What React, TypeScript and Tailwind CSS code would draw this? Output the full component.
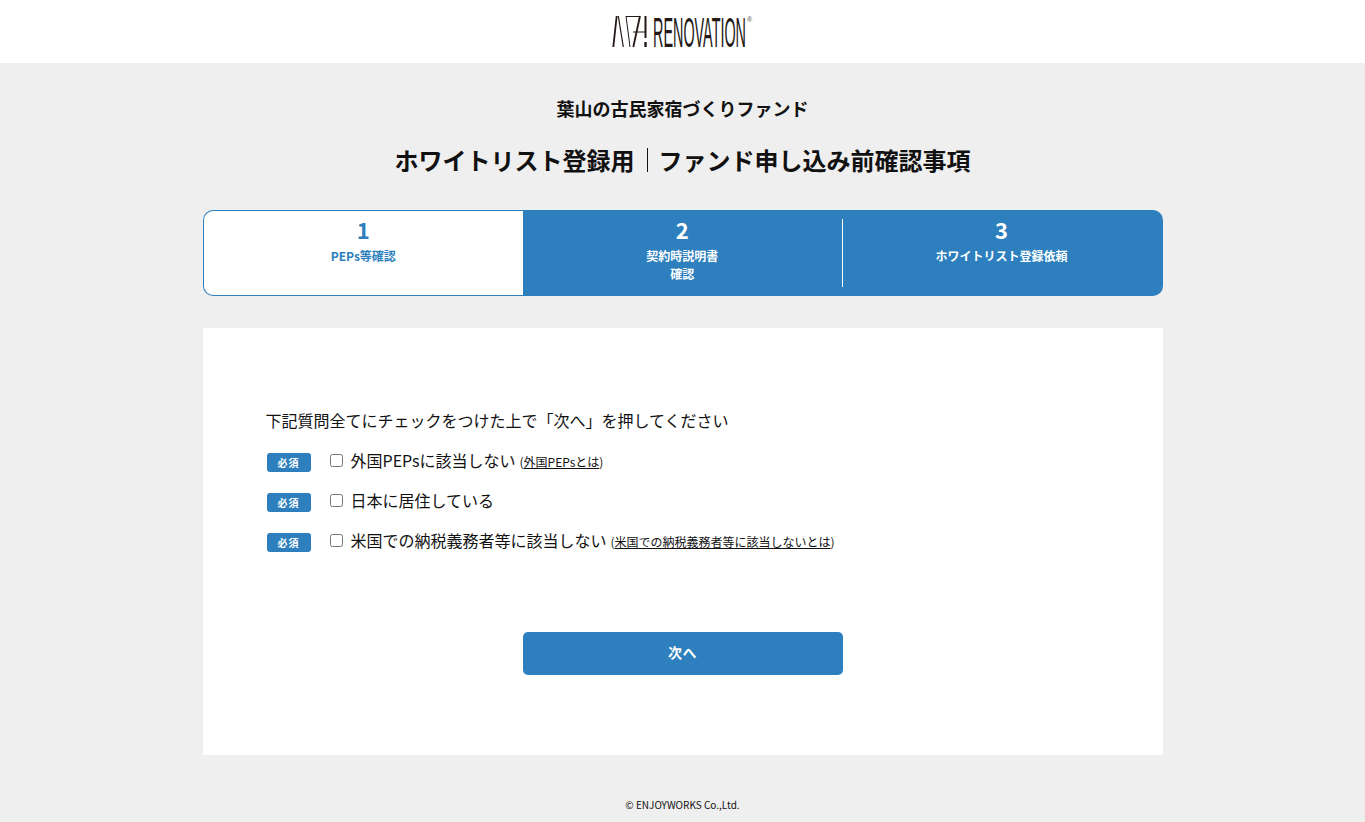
function Logo() {
  return (
    <svg width="141" height="34" viewBox="0 0 141 34" className="block">
      <g stroke="#231815" fill="none">
        <path d="M4.7 1 L1.3 32" strokeWidth="1.8" />
        <path d="M6.3 1 L11.3 32" strokeWidth="1.2" />
        <path d="M14 1 L18 32" strokeWidth="1" />
        <path d="M14 1.5 L28 1.5" strokeWidth="1" />
        <path d="M28 1 L21.3 32" strokeWidth="1.8" />
        <path d="M21 17 L33 17" strokeWidth="1" />
        <path d="M33.5 1 L33.5 23" strokeWidth="2" />
        <path d="M33.5 27 L33.5 32" strokeWidth="2.4" />
      </g>
      <text x="41" y="32" fontFamily="'Liberation Sans', sans-serif" fontSize="42" fill="#231815" textLength="93" lengthAdjust="spacingAndGlyphs">RENOVATION</text>
      <text x="135" y="7" fontFamily="'Liberation Sans', sans-serif" fontSize="7" fill="#555">®</text>
    </svg>
  );
}

function Badge() {
  return (
    <span className="flex h-[19px] w-[44px] shrink-0 items-center justify-center rounded-[3px] bg-[#2d7fbd] text-[10px] font-bold tracking-[1px] text-white">必須</span>
  );
}

function Row({ label, link }: { label: string; link?: string }) {
  return (
    <div className="flex h-[40px] items-center">
      <div className="ml-[1px] mt-[5px]"><Badge /></div>
      <label className="ml-[19px] flex items-center text-[16px] leading-[24px] text-[#111]">
        <input type="checkbox" className="m-0 h-[13px] w-[13px]" />
        <span className="ml-[8px]">{label}</span>
        {link && (
          <span className="ml-[4px] mt-[4px] text-[12px]">(<span className="underline">{link}</span>)</span>
        )}
      </label>
    </div>
  );
}

function Step({ n, children, active, last }: { n: string; children: React.ReactNode; active?: boolean; last?: boolean }) {
  return (
    <div className={active
      ? "h-[86px] w-[320.5px] rounded-l-[10px] border border-r-0 border-[#2d7fbd] bg-white text-center text-[#2d7fbd]"
      : "flex h-[86px] items-center bg-[#2d7fbd] text-center text-white " + (last ? "w-[320px] rounded-r-[10px] pr-[2px]" : "w-[319.5px]")}>
      <div className={active ? "" : "h-[68px] flex-1 " + (last ? "" : "border-r border-white")}>
        <div className={active ? "pt-[4px] text-[22px] font-bold leading-[28px]" : "-mt-[2px] text-[22px] font-bold leading-[24px]"}>{n}</div>
        <div className={active ? "mt-[4px] text-[12px] font-bold leading-[18px]" : "mt-[6px] text-[12px] font-bold leading-[18px]"}>{children}</div>
      </div>
    </div>
  );
}

export default function App() {
  return (
    <div className="min-h-[822px] bg-[#efefef]" style={{ fontFamily: "'Noto Sans CJK JP', 'Noto Sans', sans-serif" }}>
      <header className="flex h-[63px] items-center justify-center bg-white">
        <Logo />
      </header>
      <main className="mx-auto w-[960px]">
        <p className="pt-[31px] text-center text-[18px] font-bold leading-[28px] text-[#111]">葉山の古民家宿づくりファンド</p>
        <h1 className="mt-[21px] flex items-center justify-center text-[24px] font-bold leading-[34px] text-[#111]">
          ホワイトリスト登録用
          <span className="ml-[12px] mr-[11px] h-[24px] w-px bg-[#111]" />
          ファンド申し込み前確認事項
        </h1>
        <div className="mt-[33px] flex">
          <Step n="1" active>PEPs等確認</Step>
          <Step n="2">契約時説明書<br />確認</Step>
          <Step n="3" last>ホワイトリスト登録依頼</Step>
        </div>
        <section className="mt-[32px] h-[427px] bg-white px-[63px] pt-[79px]">
          <p className="text-[16px] leading-[26px] text-[#111]">下記質問全てにチェックをつけた上で「次へ」を押してください</p>
          <div className="mt-[7px]">
            <Row label="外国PEPsに該当しない" link="外国PEPsとは" />
            <Row label="日本に居住している" />
            <Row label="米国での納税義務者等に該当しない" link="米国での納税義務者等に該当しないとは" />
          </div>
          <button className="mx-auto mt-[72px] block h-[43px] w-[320px] rounded-[5px] bg-[#2d7fbd] pb-[2px] text-[14px] font-bold tracking-[0.5px] text-white">次へ</button>
        </section>
        <p className="mt-[42px] text-center text-[10px] leading-[16px] text-[#111]">© ENJOYWORKS Co.,Ltd.</p>
      </main>
    </div>
  );
}
